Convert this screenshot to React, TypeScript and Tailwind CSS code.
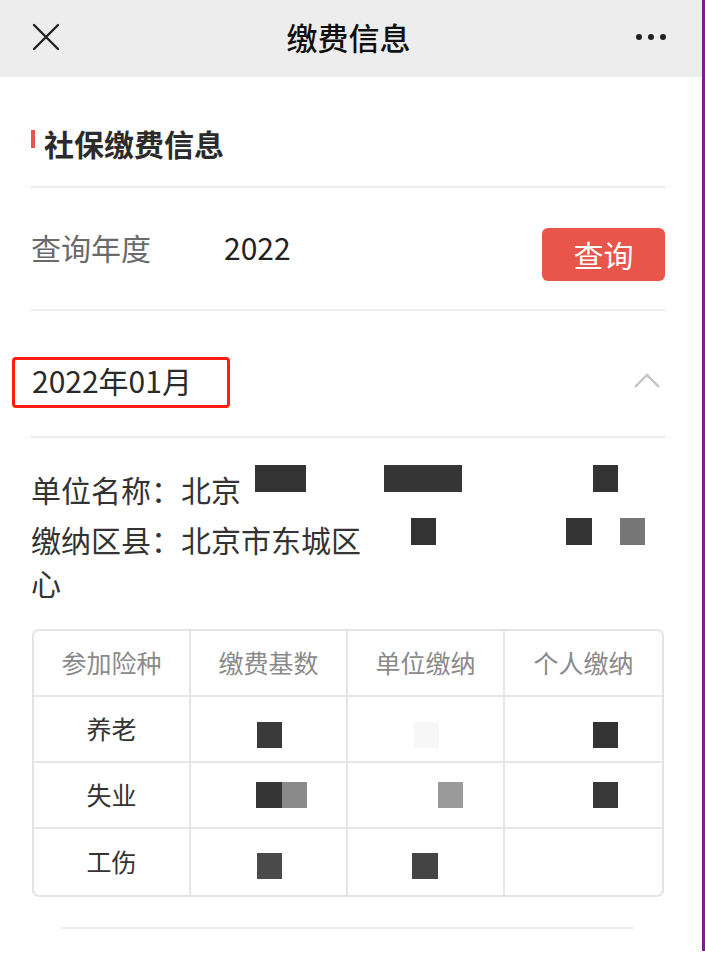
import React from "react";

const font = {
  fontFamily: '"Noto Sans CJK SC", "Noto Sans", sans-serif',
};

function Block({ x, y, w = 25, h = 26, c = "#333333" }: { x: number; y: number; w?: number; h?: number; c?: string }) {
  return (
    <div
      className="absolute blur-[0.6px]"
      style={{ left: x, top: y, width: w, height: h, background: c }}
    />
  );
}

function Cell({ children, head = false, last = false }: { children?: React.ReactNode; head?: boolean; last?: boolean }) {
  return (
    <div
      className={`relative flex h-full items-center justify-center ${last ? "" : "border-r-2 border-[#e6e6e6]"} ${
        head ? "text-[#8a8a8a]" : "text-[#333333]"
      } text-[25px]`}
    >
      {children}
    </div>
  );
}

export default function App() {
  const rows: { name: string; blocks: { x: number; y: number; w?: number; c?: string }[][] }[] = [
    {
      name: "养老",
      blocks: [
        [{ x: 66, y: 25, w: 25, c: "#3a3a3a" }],
        [{ x: 66, y: 25, w: 25, c: "#f7f7f7" }],
        [{ x: 88, y: 25, w: 25, c: "#333333" }],
      ],
    },
    {
      name: "失业",
      blocks: [
        [
          { x: 65, y: 19, w: 26, c: "#363636" },
          { x: 91, y: 19, w: 25, c: "#8a8a8a" },
        ],
        [{ x: 90, y: 19, w: 25, c: "#9a9a9a" }],
        [{ x: 88, y: 19, w: 25, c: "#383838" }],
      ],
    },
    {
      name: "工伤",
      blocks: [
        [{ x: 66, y: 24, w: 25, c: "#4a4a4a" }],
        [{ x: 64, y: 24, w: 26, c: "#444444" }],
        [],
      ],
    },
  ];

  return (
    <div className="flex w-[705px] bg-white" style={font}>
      <div className="flex h-[970px] w-[702px] flex-col bg-white">
        {/* top bar */}
        <div className="flex h-[77px] shrink-0 items-center justify-between bg-[#ededed] pl-[31px] pr-[36px]">
          <svg width="30" height="30" viewBox="0 0 30 30" className="mt-[-4px]">
            <path d="M3 3 L27 27 M27 3 L3 27" stroke="#222" strokeWidth="2.4" strokeLinecap="round" />
          </svg>
          <div className="text-[31px] font-medium leading-none text-[#111] mt-[-4px]">缴费信息</div>
          <div className="flex gap-[6px] mt-[-4px]">
            <span className="h-[6px] w-[6px] rounded-full bg-[#222]" />
            <span className="h-[6px] w-[6px] rounded-full bg-[#222]" />
            <span className="h-[6px] w-[6px] rounded-full bg-[#222]" />
          </div>
        </div>

        <div className="flex flex-col pl-[31px] pr-[37px]">
          {/* section title */}
          <div className="flex items-start pt-[48px] pb-[25px]">
            <span className="mt-[5px] h-[18px] w-[4px] bg-[#e8554a]" />
            <span className="ml-[9px] text-[30px] font-bold leading-[36px] text-[#2b2b2b]">社保缴费信息</span>
          </div>
          <div className="h-[2px] bg-[#ececec]" />

          {/* year query */}
          <div className="flex h-[121px] items-center">
            <span className="mt-[-2px] w-[193px] text-[30px] text-[#6a6a6a]">查询年度</span>
            <span className="mt-[-2px] text-[30px] text-[#222]">2022</span>
            <button className="ml-auto mt-[12px] flex h-[53px] w-[123px] items-center justify-center rounded-[6px] bg-[#e8554a] text-[30px] text-white">
              查询
            </button>
          </div>
          <div className="h-[2px] bg-[#ececec]" />

          {/* month row */}
          <div className="relative flex h-[125px] items-center justify-between">
            <span className="ml-[1px] mt-[14px] text-[30px] text-[#2a2a2a]">2022年01月</span>
            <div className="absolute left-[-19px] top-[46px] h-[51px] w-[218px] rounded-[4px] border-[3px] border-[#ff1e10]" />
            <svg width="28" height="16" viewBox="0 0 28 16" className="mr-[4px] mt-[14px]">
              <path d="M2 14 L14 2 L26 14" fill="none" stroke="#c4c4c4" strokeWidth="2.4" />
            </svg>
          </div>
          <div className="h-[2px] bg-[#ececec]" />

          {/* unit info */}
          <div className="relative pt-[30px] text-[30px] leading-[43px] text-[#333]">
            <p>单位名称：北京</p>
            <p className="mt-[7px]">缴纳区县：北京市东城区</p>
            <p>心</p>
            <Block x={224} y={27} w={51} h={27} />
            <Block x={353} y={27} w={78} h={27} c="#363636" />
            <Block x={562} y={27} w={25} h={27} />
            <Block x={380} y={80} w={25} h={27} />
            <Block x={535} y={80} w={26} h={27} />
            <Block x={589} y={80} w={25} h={27} c="#777" />
          </div>

          {/* contribution table */}
          <div className="mt-[25px] ml-[1px] w-[632px] overflow-hidden rounded-[7px] border-2 border-[#e3e3e3]">
            <div className="grid h-[66px] grid-cols-4 border-b-2 border-[#e6e6e6]">
              <Cell head>参加险种</Cell>
              <Cell head>缴费基数</Cell>
              <Cell head>单位缴纳</Cell>
              <Cell head last>个人缴纳</Cell>
            </div>
            {rows.map((r, i) => (
              <div
                key={r.name}
                className={`grid h-[66px] grid-cols-4 ${i < rows.length - 1 ? "border-b-2 border-[#e6e6e6]" : ""}`}
              >
                <Cell>{r.name}</Cell>
                {r.blocks.map((bs, j) => (
                  <Cell key={j} last={j === 2}>
                    {bs.map((b, k) => (
                      <Block key={k} x={b.x} y={b.y} w={b.w} h={26} c={b.c} />
                    ))}
                  </Cell>
                ))}
              </div>
            ))}
          </div>

          <div className="ml-[30px] mt-[30px] h-[2px] w-[573px] bg-[#eeeeee]" />
        </div>
      </div>
      <div className="h-[951px] w-[3px] bg-[#7a1f8c]" />
    </div>
  );
}
